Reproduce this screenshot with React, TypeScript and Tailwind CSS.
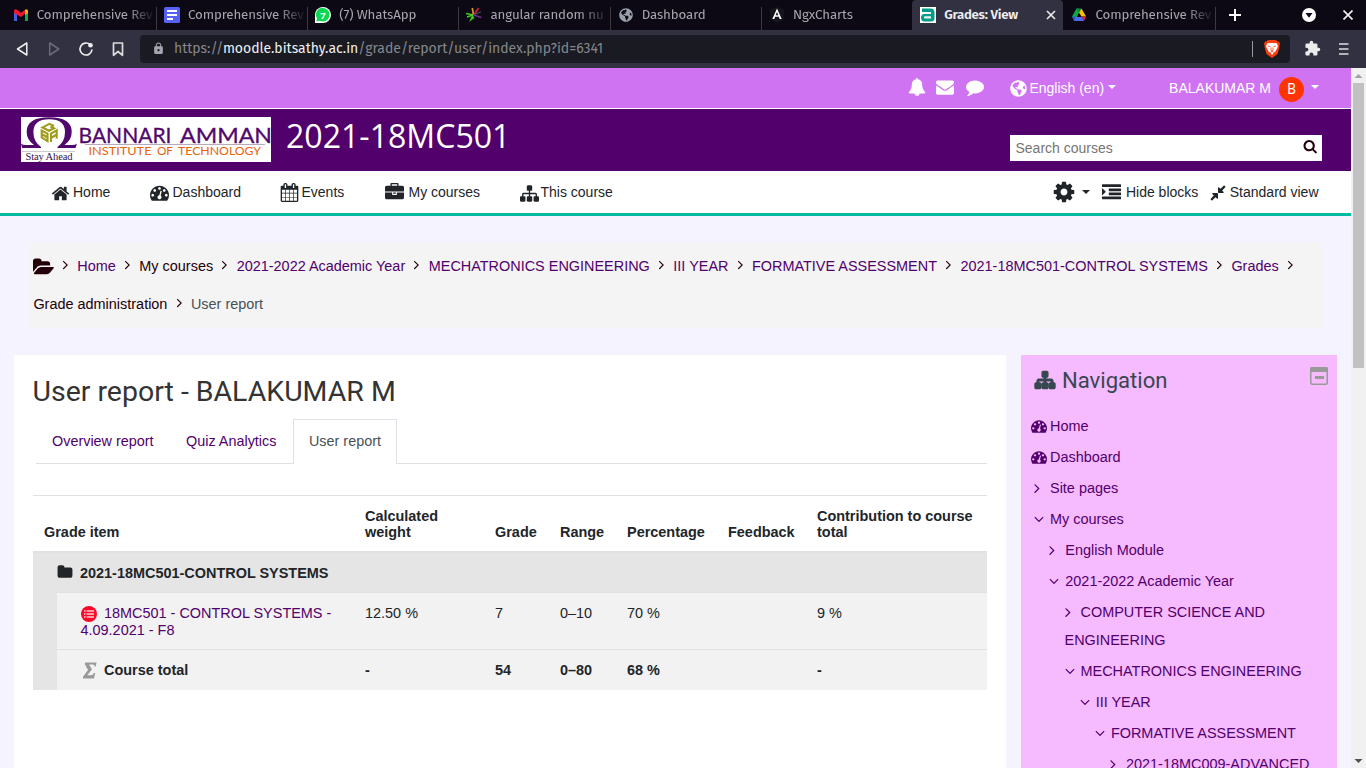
import React from 'react';
import { FaGlobeAmericas } from 'react-icons/fa';
import { MdExtension, MdLock } from 'react-icons/md';

const P = {
  home: 'M1472 992v480q0 26-19 45t-45 19h-384v-384h-256v384h-384q-26 0-45-19t-19-45v-480q0-1 .5-3t.5-3l575-474 575 474q1 2 1 6zm223-69l-62 74q-8 9-21 11h-3q-13 0-21-7l-692-577-692 577q-12 8-24 7-13-2-21-11l-62-74q-8-10-7-23.5t11-21.5l719-599q32-26 76-26t76 26l244 204v-195q0-14 9-23t23-9h192q14 0 23 9t9 23v408l219 182q10 8 11 21.5t-7 23.5z',
  dash: 'M384 1152q0-53-37.5-90.5t-90.5-37.5-90.5 37.5-37.5 90.5 37.5 90.5 90.5 37.5 90.5-37.5 37.5-90.5zm192-448q0-53-37.5-90.5t-90.5-37.5-90.5 37.5-37.5 90.5 37.5 90.5 90.5 37.5 90.5-37.5 37.5-90.5zm428 481l101-382q6-26-7.5-48.5t-38.5-29.5-48 6.5-30 39.5l-101 382q-60 5-107 43.5t-63 98.5q-20 77 20 146t117 89 146-20 89-117q16-60-6-117t-72-91zm660-33q0-53-37.5-90.5t-90.5-37.5-90.5 37.5-37.5 90.5 37.5 90.5 90.5 37.5 90.5-37.5 37.5-90.5zm-640-640q0-53-37.5-90.5t-90.5-37.5-90.5 37.5-37.5 90.5 37.5 90.5 90.5 37.5 90.5-37.5 37.5-90.5zm448 192q0-53-37.5-90.5t-90.5-37.5-90.5 37.5-37.5 90.5 37.5 90.5 90.5 37.5 90.5-37.5 37.5-90.5zm320 448q0 261-141 483-19 29-54 29h-1402q-35 0-54-29-141-221-141-483 0-182 71-348t191-286 286-191 348-71 348 71 286 191 191 286 71 348z',
  calendar: 'M192 1664h288v-288h-288v288zm352 0h320v-288h-320v288zm-352-352h288v-320h-288v320zm352 0h320v-320h-320v320zm-352-384h288v-288h-288v288zm736 736h320v-288h-320v288zm-384-736h320v-288h-320v288zm768 736h288v-288h-288v288zm-384-352h320v-320h-320v320zm-352-864v-288q0-13-9.5-22.5t-22.5-9.5h-64q-13 0-22.5 9.5t-9.5 22.5v288q0 13 9.5 22.5t22.5 9.5h64q13 0 22.5-9.5t9.5-22.5zm736 864h288v-320h-288v320zm-384-384h320v-288h-320v288zm384 0h288v-288h-288v288zm32-480v-288q0-13-9.5-22.5t-22.5-9.5h-64q-13 0-22.5 9.5t-9.5 22.5v288q0 13 9.5 22.5t22.5 9.5h64q13 0 22.5-9.5t9.5-22.5zm384-64v1280q0 52-38 90t-90 38h-1408q-52 0-90-38t-38-90v-1280q0-52 38-90t90-38h128v-96q0-66 47-113t113-47h64q66 0 113 47t47 113v96h384v-96q0-66 47-113t113-47h64q66 0 113 47t47 113v96h128q52 0 90 38t38 90z',
  briefcase: 'M640 256h512v-128h-512v128zm1152 640v480q0 66-47 113t-113 47h-1472q-66 0-113-47t-47-113v-480h672v160q0 26 19 45t45 19h320q26 0 45-19t19-45v-160h672zm-768 0v128h-256v-128h256zm768-480v384h-1792v-384q0-66 47-113t113-47h352v-160q0-40 28-68t68-28h576q40 0 68 28t28 68v160h352q66 0 113 47t47 113z',
  sitemap: 'M1792 1248v320q0 40-28 68t-68 28h-320q-40 0-68-28t-28-68v-320q0-40 28-68t68-28h96v-192h-512v192h96q40 0 68 28t28 68v320q0 40-28 68t-68 28h-320q-40 0-68-28t-28-68v-320q0-40 28-68t68-28h96v-192h-512v192h96q40 0 68 28t28 68v320q0 40-28 68t-68 28h-320q-40 0-68-28t-28-68v-320q0-40 28-68t68-28h96v-192q0-52 38-90t90-38h512v-192h-96q-40 0-68-28t-28-68v-320q0-40 28-68t68-28h320q40 0 68 28t28 68v320q0 40-28 68t-68 28h-96v192h512q52 0 90 38t38 90v192h96q40 0 68 28t28 68z',
  cog: 'M1152 896q0-106-75-181t-181-75-181 75-75 181 75 181 181 75 181-75 75-181zm512-109v222q0 12-8 23t-20 13l-185 28q-19 54-39 91 35 50 107 138 10 12 10 25t-9 23q-27 37-99 108t-94 71q-12 0-26-9l-138-108q-44 23-91 38-16 136-29 186-7 28-36 28h-222q-14 0-24.5-8.5t-11.5-21.5l-28-184q-49-16-90-37l-141 107q-10 9-25 9-14 0-25-11-126-114-165-168-7-10-7-23 0-12 8-23 15-21 51-66.5t54-70.5q-27-50-41-99l-183-27q-13-2-21-12.5t-8-23.5v-222q0-12 8-23t19-13l186-28q14-46 39-92-40-57-107-138-10-12-10-24 0-10 9-23 26-36 98.5-107.5t94.5-71.5q13 0 26 10l138 107q44-23 91-38 16-136 29-186 7-28 36-28h222q14 0 24.5 8.5t11.5 21.5l28 184q49 16 90 37l142-107q9-9 24-9 13 0 25 10 129 119 165 170 7 8 7 22 0 12-8 23-15 21-51 66.5t-54 70.5q26 50 41 98l183 28q13 2 21 12.5t8 23.5z',
  indent: 'M352 832q0 14-9 23l-288 288q-9 9-23 9-13 0-22.5-9.5t-9.5-22.5v-576q0-13 9.5-22.5t22.5-9.5q14 0 23 9l288 288q9 9 9 23zm1440 480v192q0 13-9.5 22.5t-22.5 9.5h-1728q-13 0-22.5-9.5t-9.5-22.5v-192q0-13 9.5-22.5t22.5-9.5h1728q13 0 22.5 9.5t9.5 22.5zm0-384v192q0 13-9.5 22.5t-22.5 9.5h-1088q-13 0-22.5-9.5t-9.5-22.5v-192q0-13 9.5-22.5t22.5-9.5h1088q13 0 22.5 9.5t9.5 22.5zm0-384v192q0 13-9.5 22.5t-22.5 9.5h-1088q-13 0-22.5-9.5t-9.5-22.5v-192q0-13 9.5-22.5t22.5-9.5h1088q13 0 22.5 9.5t9.5 22.5zm0-384v192q0 13-9.5 22.5t-22.5 9.5h-1728q-13 0-22.5-9.5t-9.5-22.5v-192q0-13 9.5-22.5t22.5-9.5h1728q13 0 22.5 9.5t9.5 22.5z',
  compress: 'M896 960v448q0 26-19 45t-45 19-45-19l-144-144-332 332q-10 10-23 10t-23-10l-114-114q-10-10-10-23t10-23l332-332-144-144q-19-19-19-45t19-45 45-19h448q26 0 45 19t19 45zm755-672q0 13-10 23l-332 332 144 144q19 19 19 45t-19 45-45 19h-448q-26 0-45-19t-19-45v-448q0-26 19-45t45-19 45 19l144 144 332-332q10-10 23-10t23 10l114 114q10 10 10 23z',
  folderOpen: 'M1879 952q0 31-31 66l-336 396q-43 51-120.5 86.5t-143.5 35.5h-1088q-34 0-60.5-13t-26.5-43q0-31 31-66l336-396q43-51 120.5-86.5t143.5-35.5h1088q34 0 60.5 13t26.5 43zm-343-344v160h-832q-94 0-197 47.5t-164 119.5l-337 396-5 6q0-4-.5-12.5t-.5-12.5v-960q0-92 66-158t158-66h320q92 0 158 66t66 158v32h544q92 0 158 66t66 158z',
  folder: 'M1728 608v704q0 92-66 158t-158 66h-1216q-92 0-158-66t-66-158v-960q0-92 66-158t158-66h320q92 0 158 66t66 158v32h672q92 0 158 66t66 158z',
  search: 'M1216 832q0-185-131.5-316.5t-316.5-131.5-316.5 131.5-131.5 316.5 131.5 316.5 316.5 131.5 316.5-131.5 131.5-316.5zm512 832q0 52-38 90t-90 38q-54 0-90-38l-343-342q-179 124-399 124-143 0-273.5-55.5t-225-150-150-225-55.5-273.5 55.5-273.5 150-225 225-150 273.5-55.5 273.5 55.5 225 150 150 225 55.5 273.5q0 220-124 399l343 343q37 37 37 90z',
  right: 'M1171 960q0 13-10 23l-466 466q-10 10-23 10t-23-10l-50-50q-10-10-10-23t10-23l393-393-393-393q-10-10-10-23t10-23l50-50q10-10 23-10t23 10l466 466q10 10 10 23z',
  down: 'M1395 736q0 13-10 23l-466 466q-10 10-23 10t-23-10l-466-466q-10-10-10-23t10-23l50-50q10-10 23-10t23 10l393 393 393-393q10-10 23-10t23 10l50 50q10 10 10 23z',
  bell: 'M912 1696q0-16-16-16-59 0-101.5-42.5t-42.5-101.5q0-16-16-16t-16 16q0 73 51.5 124.5t124.5 51.5q16 0 16-16zm816-288q0 52-38 90t-90 38h-448q0 106-75 181t-181 75-181-75-75-181h-448q-52 0-90-38t-38-90q50-42 91-88t85-119.5 74.5-158.5 50-206 19.5-260q0-152 117-282.5t307-158.5q-8-19-8-39 0-40 28-68t68-28 68 28 28 68q0 20-8 39 190 28 307 158.5t117 282.5q0 139 19.5 260t50 206 74.5 158.5 85 119.5 91 88z',
  envelope: 'M1792 710v794q0 66-47 113t-113 47h-1472q-66 0-113-47t-47-113v-794q44 49 101 87 362 246 497 345 57 42 92.5 65.5t94.5 48 110 24.5h2q51 0 110-24.5t94.5-48 92.5-65.5q170-123 498-345 57-39 100-87zm0-294q0 79-49 151t-122 123q-376 261-468 325-10 7-42.5 31t-54 38.5-52 32.5-57.5 27-50 9h-2q-23 0-50-9t-57.5-27-52-32.5-54-38.5-42.5-31q-91-64-262-182.5t-205-142.5q-62-42-117-115.5t-55-136.5q0-78 41.5-130t118.5-52h1472q65 0 112.5 47t47.5 113z',
  comment: 'M1792 896q0 174-120 321.5t-326 233-450 85.5q-70 0-145-8-198 175-460 242-49 14-114 22-17 2-30.5-9t-17.5-29v-1q-3-4-.5-12t2-10 4.5-9.5l6-9 7-8.5 8-9q7-8 31-34.5t34.5-38 31-39.5 32.5-51 27-59 26-76q-157-89-247.5-220t-90.5-281q0-130 71-248.5t191-204.5 286-136.5 348-50.5q244 0 450 85.5t326 233 120 321.5z',
};

function Ic({ n, s, w = 1792, className = '' }: { n: keyof typeof P; s: number; w?: number; className?: string }) {
  return (
    <svg viewBox={`0 0 ${w} 1792`} width={(s * w) / 1792} height={s} fill="currentColor" className={`shrink-0 overflow-visible ${className}`}>
      <path d={P[n]} />
    </svg>
  );
}

function Caret({ className = '' }: { className?: string }) {
  return <span className={`inline-block border-x-[4.5px] border-t-[4.5px] border-x-transparent border-t-current ${className}`} />;
}

const Gmail = () => (
  <svg width="16" height="16" viewBox="0 0 16 16">
    <path d="M1 14V4l3 2v8z" fill="#4a5fe0" />
    <path d="M12 14V6l3-2v10z" fill="#16a84b" />
    <path d="M1 6V3.600q1-2 3-.8l4 3 4-3v3.700L8 10z" fill="#ef1733" />
    <path d="M12 6.500V2.800q2-1.200 3 .8V6l-3 2z" fill="#fbbd05" />
  </svg>
);
const Docs = () => (
  <svg width="16" height="16" viewBox="0 0 16 16">
    <rect width="16" height="16" rx="1.500" fill="#5762f5" />
    <path d="M3 3h10v2H3zM3 7h10v2H3zM3 11h6v2H3z" fill="#fff" />
  </svg>
);
const WhatsApp = () => (
  <svg width="16" height="16" viewBox="0 0 16 16">
    <path d="M0 16V8a8 8 0 1 1 8 8z" fill="#fff" />
    <path d="M1.300 14.500l.8-3a6.800 6.800 0 1 1 2.600 2.300z" fill="#07d84d" />
    <text x="8" y="11.500" textAnchor="middle" fontSize="9.500" fontWeight="700" fill="#fff" fontFamily="Noto Sans, sans-serif">7</text>
  </svg>
);
const Burst = () => (
  <svg width="16" height="16" viewBox="0 0 16 16" fill="none">
    <path d="M6.500 7.500L8.500 11 3 15z" fill="#36c51c" />
    <path d="M0 6.500l7 1.500M1 10l6-2" stroke="#3ecb25" strokeWidth="1.700" />
    <path d="M7.500 8L6.300 1" stroke="#d5962b" strokeWidth="1.700" />
    <path d="M8 8l4.500-7" stroke="#cf1d3e" strokeWidth="1.800" />
    <path d="M8.500 7.500L15 5" stroke="#3a5a72" strokeWidth="1" />
    <path d="M7.500 8l8 2.500" stroke="#6d2a90" strokeWidth="1.800" />
  </svg>
);
const Angular = () => (
  <svg width="16" height="16" viewBox="0 0 16 16">
    <path d="M8 0l7.500 2.600-1.200 9.900L8 16l-6.300-3.500L.5 2.600z" fill="#15151d" />
    <path d="M8 1.500L3.300 12h2l.9-2.300h3.600l.9 2.300h2zM8 5l1.300 3.200H6.700z" fill="#fff" fillRule="evenodd" />
  </svg>
);
const Site = () => (
  <svg width="16" height="16" viewBox="0 0 16 16">
    <rect width="16" height="16" fill="#fff" />
    <path d="M2 1.500h8.500q4 0 4 4V11q0 3.500-3.500 3.500H4.500Q1 14.500 1 10.800T4.500 7H11V5H2z" fill="#009c89" />
    <path d="M5 9.300h6v2.200H5a1.100 1.100 0 0 1 0-2.200z" fill="#e8f6f4" />
  </svg>
);
const Drive = () => (
  <svg width="16" height="16" viewBox="0 0 16 16">
    <path d="M5.500 1.500h2.500v4L4 14 1 9.500z" fill="#10a749" />
    <path d="M5.500 1.500h5L8 5.500z" fill="#07863b" />
    <path d="M10.500 1.500L15 9.500h-4.500L8 5.500z" fill="#fcc004" />
    <path d="M1 9.500h4L3 14z" fill="#3155d2" />
    <path d="M5 10h6l2 4H3z" fill="#5067f6" />
    <path d="M11 9.500h4L13 14z" fill="#e72635" />
  </svg>
);

type Tab = { t: string; icon: React.ReactNode; active?: boolean; sep?: boolean };
const tabs: Tab[] = [
  { t: 'Comprehensive Rev', icon: <Gmail />, sep: true },
  { t: 'Comprehensive Rev', icon: <Docs />, sep: true },
  { t: '(7) WhatsApp', icon: <WhatsApp />, sep: true },
  { t: 'angular random nu', icon: <Burst />, sep: true },
  { t: 'Dashboard', icon: <FaGlobeAmericas size={14} color="#9aa0ab" />, sep: true },
  { t: 'NgxCharts', icon: <Angular /> },
  { t: 'Grades: View', icon: <Site />, active: true },
  { t: 'Comprehensive Rev', icon: <Drive />, sep: true },
];

function Browser() {
  return (
    <div className="shrink-0 font-['Fira_Sans','Noto_Sans',sans-serif]">
      <div className="flex h-[30px] items-end bg-[#0c0914] pl-[4.7px]">
        {tabs.map((t, i) => (
          <div
            key={i}
            className={`flex h-[30px] w-[151.25px] shrink-0 items-center pl-2 ${t.active ? 'rounded-t bg-[#323142]' : ''}`}
          >
            <span className="flex w-4 shrink-0 justify-center">{t.icon}</span>
            <span
              className={`ml-2 flex-1 overflow-hidden text-[13.3px] leading-5 whitespace-nowrap ${
                t.active
                  ? 'font-semibold tracking-[-0.3px] text-[#eeeef0]'
                  : 'tracking-[-0.12px] text-[#a7a5ab] [mask-image:linear-gradient(to_right,#000_75%,transparent_100%)]'
              }`}
            >
              {t.t}
            </span>
            {t.active && (
              <svg width="10" height="10" viewBox="0 0 10 10" className="mr-[7px]" stroke="#eee" strokeWidth="1.600">
                <path d="M1 1l8 8M9 1l-8 8" />
              </svg>
            )}
            {t.sep && <span className="-mr-px h-[23px] w-px self-end bg-[#3c3a3f]" />}
          </div>
        ))}
        <div className="flex h-[30px] flex-1 items-center">
          <svg width="12" height="12" viewBox="0 0 12 12" className="ml-[14px]" stroke="#fff" strokeWidth="2">
            <path d="M6 0v12M0 6h12" />
          </svg>
          <svg width="14" height="14" viewBox="0 0 14 14" className="ml-[61px]">
            <circle cx="7" cy="7" r="7" fill="#fff" />
            <path d="M3.500 5h7L7 9.800z" fill="#0c0914" />
          </svg>
          <svg width="10" height="10" viewBox="0 0 10 10" className="ml-[27px]" stroke="#eee" strokeWidth="1.700">
            <path d="M.5.500l9 9M9.500.500l-9 9" />
          </svg>
        </div>
      </div>
      <div className="flex h-[38px] items-center bg-[#323142] pb-1 pt-1">
        <svg width="124" height="16" viewBox="0 0 124 16" className="ml-4 shrink-0" fill="none" strokeWidth="1.500" strokeLinejoin="round">
          <path d="M10.800 2v12L1.500 8z" stroke="#eee" />
          <path d="M33.700 2v12L42.800 8z" stroke="#6d6b78" />
          <path d="M74 3.500a6 6 0 1 0 2 5" stroke="#eee" strokeWidth="1.700" />
          <circle cx="74.500" cy="4.200" r="2.300" fill="#eee" />
          <path d="M97.500 2h9v12.300L102 10.500l-4.500 3.800z" stroke="#ddd" strokeWidth="1.700" />
        </svg>
        <div className="flex h-7 w-[1150px] shrink-0 items-center rounded bg-[#1a1a22]">
          <MdLock size={13} color="#a4a5ae" className="ml-[12px] mb-[2px]" />
          <span className="ml-[9px] text-[14px] leading-5 tracking-[-0.015px] text-[#85878c]">
            https://<span className="text-[#f0f0f2]">moodle.bitsathy.ac.in</span>/grade/report/user/index.php?id=6341
          </span>
          <span className="ml-auto h-4 w-px bg-[#9a9aa0]" />
          <svg width="16" height="18" viewBox="0 0 16 18" className="ml-[11px] mr-[10px]">
            <path d="M4 0h8l1.500 1.500L15 1.500l1 2.500-.7 2 .2 1-2 7L8 18l-5.500-4-2-7 .2-1L0 4l1-2.500 1.500 0z" fill="#fb3b0d" />
            <path d="M3.500 3l2 .3L8 2.700l2.500.6 2-.3 1.500 3-.8 2-1.700 3.500L10 12.500 8 15l-2-2.500-1.500-1L2.800 8 2 6z" fill="#fff" />
            <path d="M4 6l2.500.8M12 6l-2.500.8M7.200 7.500L6.800 10 8 11l1.200-1-.4-2.500M6.300 12.300L8 11.300l1.700 1" fill="none" stroke="#fb3b0d" strokeWidth=".8" />
          </svg>
        </div>
        <MdExtension size={17} color="#ececee" className="ml-[14px] mb-[1px]" />
        <svg width="10" height="12" viewBox="0 0 10 12" className="ml-[18px]" stroke="#ddd" strokeWidth="1.700">
          <path d="M0 1h9.500M0 6h9.500M0 11h9.500" />
        </svg>
      </div>
    </div>
  );
}

function Logo() {
  return (
    <svg width="250" height="45" viewBox="0 0 250 45" className="shrink-0">
      <rect width="250" height="45" fill="#fff" />
      <path
        d="M0 26.500Q1.500 28 5 28h8Q5.700 23 5.700 15Q5.700 .3 28.200 .3T50.700 15Q50.700 23 43.500 28H51q3.500 0 5-1.500L54.500 31h-18v-1Q44 24.500 44 15Q44 2.300 28.200 2.300T12.400 15Q12.400 24.500 20 30v1H1z"
        fill="#51086c"
      />
      <g fill="none" stroke="#a09c1c" strokeWidth="2.100">
        <path d="M33 9l-4.500-2.200-7 3.600 6.500 3.300 5-2.500-3.500-1.500" />
        <path d="M20.700 13.500v7l5.800 3.700v-7.500zM20.700 17l5.800 3.500" />
        <path d="M30 25v-8.300l5.700-3.300v8M30 21l5.700-3.500" />
      </g>
      <path d="M1 34.500h53" stroke="#ccc" />
      <text x="4.500" y="42.700" fontSize="10.500" textLength="47" fill="#34104b" fontFamily="Liberation Serif, serif">Stay Ahead</text>
      <g fontSize="20.500" fontFamily="Lato, sans-serif" fill="#51086c" stroke="#51086c" strokeWidth=".3">
        <text x="57.500" y="25.700" textLength="93" lengthAdjust="spacingAndGlyphs">BANNARI</text>
        <text x="159" y="25.700" textLength="92" lengthAdjust="spacingAndGlyphs">AMMAN</text>
      </g>
      <path d="M64 27.500h180" stroke="#b8a8bb" />
      <g fontSize="12" fontFamily="Lato, sans-serif" fill="#e5630a">
        <text x="67.500" y="38.200" textLength="63" lengthAdjust="spacingAndGlyphs">INSTITUTE</text>
        <text x="136" y="38.200" textLength="16" lengthAdjust="spacingAndGlyphs">OF</text>
        <text x="157" y="38.200" textLength="83" lengthAdjust="spacingAndGlyphs">TECHNOLOGY</text>
      </g>
    </svg>
  );
}

const crumbs1: [string, boolean][] = [
  ['Home', true],
  ['My courses', false],
  ['2021-2022 Academic Year', true],
  ['MECHATRONICS ENGINEERING', true],
  ['III YEAR', true],
  ['FORMATIVE ASSESSMENT', true],
  ['2021-18MC501-CONTROL SYSTEMS', true],
  ['Grades', true],
];

function Sep() {
  return (
    <span className="flex h-[18px] w-[23.500px] shrink-0 items-center justify-center pb-[6px] text-[#240008]">
      <Ic n="right" s={15} />
    </span>
  );
}

const tree: { l: string; t: string; k: 'dash' | 'right' | 'down' }[] = [
  { l: 'pl-[10px]', t: 'Home', k: 'dash' },
  { l: 'pl-[10px]', t: 'Dashboard', k: 'dash' },
  { l: 'pl-[10px]', t: 'Site pages', k: 'right' },
  { l: 'pl-[10px]', t: 'My courses', k: 'down' },
  { l: 'pl-[25.300px]', t: 'English Module', k: 'right' },
  { l: 'pl-[25.300px]', t: '2021-2022 Academic Year', k: 'down' },
  { l: 'pl-[43.500px] indent-[-3px]', t: 'COMPUTER SCIENCE AND ENGINEERING', k: 'right' },
  { l: 'pl-[40.500px]', t: 'MECHATRONICS ENGINEERING', k: 'down' },
  { l: 'pl-[55.700px]', t: 'III YEAR', k: 'down' },
  { l: 'pl-[70.900px]', t: 'FORMATIVE ASSESSMENT', k: 'down' },
  { l: 'pl-[86px]', t: '2021-18MC009-ADVANCED', k: 'right' },
];

const rowCols = 'grid grid-cols-[297px_130px_65px_67px_101px_89px_181px] border-t border-[#dee2e6] bg-[#f2f2f2] pt-[12px] leading-[17px] [&>*]:pl-[11px]';

export default function App() {
  return (
    <div className="flex h-[768px] w-[1366px] flex-col overflow-hidden font-['Liberation_Sans',Arial,sans-serif] text-[14.45px] text-[#212529]">
      <Browser />
      <div className="flex min-h-0 flex-1">
        <div className="flex w-[1351px] flex-col overflow-hidden bg-[#f5f3ff]">
          <header className="flex h-[41px] shrink-0 items-center justify-end border-b border-white bg-[#cf73f3] text-[14px] text-white">
            <Ic n="bell" s={18} className="mr-[10px] mb-[3px]" />
            <Ic n="envelope" s={18} className="mr-3 mb-[3px]" />
            <Ic n="comment" s={18} className="mr-[26px] mb-[2px]" />
            <FaGlobeAmericas size={17} />
            <span className="ml-[2px]">English (en)</span>
            <Caret className="ml-[4px] mb-[3px]" />
            <span className="ml-[53px]">BALAKUMAR M</span>
            <span className="ml-2 mt-[3px] flex size-[25px] items-center justify-center rounded-full bg-[#ff3403] font-['Roboto',sans-serif] text-[14px]">B</span>
            <Caret className="ml-[7px] mr-8 mb-[3px]" />
          </header>
          <div className="flex h-[62px] shrink-0 bg-[#51006c] pl-[21px] pt-2">
            <Logo />
            <h1 className="ml-[15px] font-['Open_Sans',sans-serif] text-[32.100px] leading-[38px] text-white">2021-18MC501</h1>
            <div className="ml-auto mr-[29px] mt-[18px] flex h-[26px] w-[312px] items-center justify-between bg-white pl-[5.500px] pr-[5px] text-[14px] text-[#757575]">
              <span className="mt-px">Search courses</span>
              <Ic n="search" s={14.4} className="mb-[3px] text-[#240008]" />
            </div>
          </div>
          <nav className="flex h-[45px] shrink-0 items-center border-b-[3px] border-[#00bba0] bg-white pl-[51px] text-[14px]">
            <Ic n="home" s={19} className="mt-[2px]" />
            <span className="ml-[3px] w-[77px]">Home</span>
            <Ic n="dash" s={19} className="mt-[1px]" />
            <span className="ml-[3.500px] w-[107.500px]">Dashboard</span>
            <Ic n="calendar" s={19} className="mt-[1px]" />
            <span className="ml-[2.500px] w-[83px]">Events</span>
            <Ic n="briefcase" s={19} />
            <span className="ml-[5px] w-[111px]">My courses</span>
            <Ic n="sitemap" s={19} className="mt-[2px]" />
            <span className="ml-[2px]">This course</span>
            <span className="ml-auto flex items-center">
              <Ic n="cog" s={24} />
              <Caret className="ml-[5.500px] mr-[12.500px]" />
              <Ic n="indent" s={19} className="mt-[1px]" />
              <span className="ml-[4.500px] mr-[10.500px]">Hide blocks</span>
              <Ic n="compress" s={18} className="mt-[2px]" />
              <span className="ml-[3px] mr-[32.500px]">Standard view</span>
            </span>
          </nav>

          <div className="ml-[30px] mr-[29px] mt-[26px] h-[86px] shrink-0 bg-[#f4f4f4] pl-[3.400px] pt-[6px]">
            <div className="flex h-[38px] items-center whitespace-nowrap">
              <Ic n="folderOpen" s={20} w={1920} className="-mr-px mb-px text-[#240008]" />
              <Sep />
              {crumbs1.map(([t, link]) => (
                <React.Fragment key={t}>
                  <span className={link ? 'text-[#51006c]' : 'text-[#240008]'}>{t}</span>
                  <Sep />
                </React.Fragment>
              ))}
            </div>
            <div className="flex h-[38px] items-center">
              <span className="text-[#240008]">Grade administration</span>
              <Sep />
              <span className="text-[#495057]">User report</span>
            </div>
          </div>

          <div className="mt-[27px] flex min-h-0 flex-1 gap-[15px] pl-[14px]">
            <main className="w-[992px] shrink-0 bg-white pl-[19px] pr-[19px]">
              <h2 className="mt-5 -ml-[0.500px] font-['Roboto',sans-serif] text-[28.470px] leading-[34px] text-[#333]">User report - BALAKUMAR M</h2>
              <div className="ml-[3px] mt-[10px] flex h-[45px] border-b border-[#dee2e6] text-[14.4px] text-[#51006c]">
                <span className="pl-[16px] leading-[45px]">Overview report</span>
                <span className="pl-[32.500px] leading-[45px]">Quiz Analytics</span>
                <span className="ml-[16.500px] h-[45px] border border-b-0 border-[#dee2e6] bg-white px-[15px] leading-[43px] text-[#495057]">User report</span>
              </div>
              <div className="mt-[31px] border-t border-[#dee2e6]">
                <div className="grid h-[57px] grid-cols-[321px_130px_65px_67px_101px_89px_181px] items-end border-b-2 border-[#dee2e6] pb-[11px] font-bold leading-4 [&>*]:pl-[11px]">
                  <span>Grade item</span>
                  <span>Calculated<br />weight</span>
                  <span>Grade</span>
                  <span>Range</span>
                  <span>Percentage</span>
                  <span>Feedback</span>
                  <span>Contribution to course total</span>
                </div>
                <div className="bg-[#e5e5e5] pl-6">
                  <div className="flex h-[39px] items-center pt-px font-bold">
                    <Ic n="folder" s={16} className="mb-[2px] ml-[-0.500px]" />
                    <span className="ml-[7.500px] mt-px">2021-18MC501-CONTROL SYSTEMS</span>
                  </div>
                  <div className={`h-[57px] ${rowCols}`}>
                    <div className="!pl-[23.500px] text-[#51006c]">
                      <svg width="16" height="16" viewBox="0 0 16 16" className="mr-[7.500px] inline-block align-[-4px]">
                        <circle cx="8" cy="8" r="8" fill="#ff0527" />
                        <path d="M3 5h1.500M3 8h1.500M3 11h1.500M5.500 5H13M5.500 8H13M5.500 11H13" stroke="#ffd0d6" strokeWidth="1.500" />
                      </svg>
                      18MC501 - CONTROL SYSTEMS -<br />4.09.2021 - F8
                    </div>
                    <span>12.50 %</span>
                    <span>7</span>
                    <span>0–10</span>
                    <span>70 %</span>
                    <span />
                    <span>9 %</span>
                  </div>
                  <div className={`h-[41px] font-bold ${rowCols}`}>
                    <div className="flex !pl-[24px]">
                      <svg width="16" height="17" viewBox="0 0 16 17" className="mr-[7px]">
                        <path d="M4 .5h11.500l-.7 4h-1q0-2-2-2H8l3 4.700-4.700 6h3.700q2 0 3-2.200h1.200L13 16.500H2v-1.800l5-6.700L4 2.500z" fill="#999" />
                      </svg>
                      Course total
                    </div>
                    <span>-</span>
                    <span>54</span>
                    <span>0–80</span>
                    <span>68 %</span>
                    <span />
                    <span>-</span>
                  </div>
                </div>
              </div>
            </main>
            <aside className="w-[316px] shrink-0 overflow-hidden bg-[#f6baff] text-[#51006c]">
              <div className="flex h-[57px] items-start pl-[13.500px] pt-[11px]">
                <Ic n="sitemap" s={20} className="mt-[4px] stroke-current text-[#37474f] [stroke-width:120]" />
                <h3 className="ml-[7.500px] font-['Roboto',sans-serif] text-[22.100px] leading-[28px] text-[#37474f]">Navigation</h3>
                <svg width="18" height="18" viewBox="0 0 18 18" className="ml-auto mr-[9px] mt-px">
                  <rect x=".75" y=".75" width="16.500" height="16.500" rx="1.500" fill="none" stroke="#999" strokeWidth="1.500" />
                  <path d="M0 1.500Q0 0 1.500 0h15Q18 0 18 1.500V5H0z" fill="#999" />
                  <path d="M5 10.500h9" stroke="#999" strokeWidth="3" />
                </svg>
              </div>
              {tree.map((r) => (
                <div key={r.t} className={`mb-[3px] leading-7 ${r.l}`}>
                  <span className="inline-block h-4 w-[19px] align-[-3px] indent-0">
                    {r.k === 'dash' ? (
                      <Ic n="dash" s={16} />
                    ) : (
                      <Ic n={r.k} s={16} className={r.k === 'right' ? '-ml-[2px]' : ''} />
                    )}
                  </span>
                  {r.t}
                </div>
              ))}
            </aside>
          </div>
        </div>
        <div className="flex w-[15px] flex-col items-center bg-[#f1f1f1]">
          <svg width="15" height="15" viewBox="0 0 15 15"><path d="M3.500 10h8L7.500 6z" fill="#a3a3a3" /></svg>
          <div className="h-[285px] w-[11px] bg-[#c1c1c1]" />
          <svg width="15" height="15" viewBox="0 0 15 15" className="mt-auto"><path d="M3.500 6h8L7.500 10z" fill="#505050" /></svg>
        </div>
      </div>
    </div>
  );
}
